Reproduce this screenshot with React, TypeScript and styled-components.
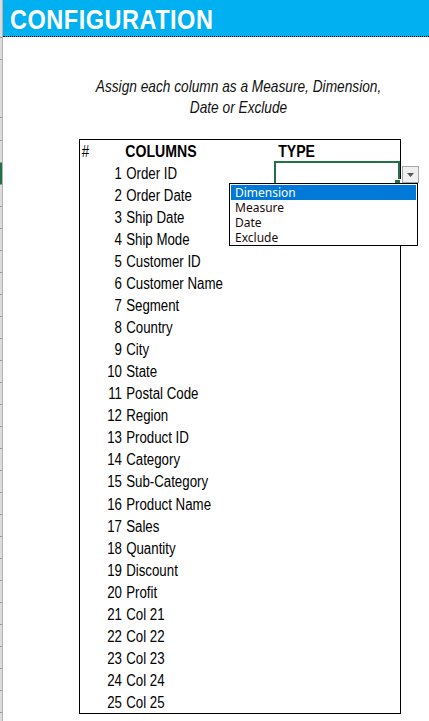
import React from 'react'
import styled, { createGlobalStyle } from 'styled-components'

const GlobalStyle = createGlobalStyle`
  html, body {
    margin: 0;
    padding: 0;
    background: #ffffff;
  }
  body {
    font-family: "Liberation Sans", Arial, sans-serif;
    color: #000;
  }
`

const columns = [
  'Order ID', 'Order Date', 'Ship Date', 'Ship Mode', 'Customer ID', 'Customer Name',
  'Segment', 'Country', 'City', 'State', 'Postal Code', 'Region', 'Product ID',
  'Category', 'Sub-Category', 'Product Name', 'Sales', 'Quantity', 'Discount', 'Profit',
  'Col 21', 'Col 22', 'Col 23', 'Col 24', 'Col 25',
]

const options = ['Dimension', 'Measure', 'Date', 'Exclude']

// heights of the spreadsheet rows, as seen in the row header strip
const gutterRows = [38, 22, 58, 23, 22, ...columns.map(() => 22), 40]

// no narrow face is installed, so the sheet text is squeezed to look like Arial Narrow
const NARROW = 0.83

export default function App() {
  return (
    <>
      <GlobalStyle />
      <Page>
        <Gutter>
          {gutterRows.map((h, i) => (
            <GutterCell key={i} h={h} active={i === 5} />
          ))}
        </Gutter>
        <Sheet>
          <TitleBar>
            <Title>CONFIGURATION</Title>
          </TitleBar>
          <Instructions>
            Assign each column as a Measure, Dimension,
            <br />
            Date or Exclude
          </Instructions>
          <Table>
            <HeaderRow>
              <Hash>#</Hash>
              <HeadLabel>COLUMNS</HeadLabel>
              <HeadType>TYPE</HeadType>
            </HeaderRow>
            {columns.map((name, i) => (
              <Row key={name}>
                <Num>{i + 1}</Num>
                <Name>{name}</Name>
                <TypeCell>
                  {i === 0 && (
                    <>
                      <Selection>
                        <Handle />
                      </Selection>
                      <ArrowButton>
                        <svg width="7" height="4" viewBox="0 0 7 4">
                          <path d="M0 0 L7 0 L3.5 4 Z" fill="#555" />
                        </svg>
                      </ArrowButton>
                      <List>
                        {options.map((o, j) => (
                          <Option key={o} selected={j === 0}>{o}</Option>
                        ))}
                      </List>
                    </>
                  )}
                </TypeCell>
              </Row>
            ))}
          </Table>
        </Sheet>
      </Page>
    </>
  )
}

const Page = styled.div`
  display: flex;
  width: 429px;
  height: 721px;
  overflow: hidden;
`

const Gutter = styled.div`
  width: 3px;
  flex-shrink: 0;
  display: flex;
  flex-direction: column;
  background: #dcdcdc;
  border-right: 1px solid #b4b4b4;
  box-sizing: border-box;
`

const GutterCell = styled.div<{ h: number; active?: boolean }>`
  height: ${(p) => p.h}px;
  flex-shrink: 0;
  box-sizing: border-box;
  border-bottom: 1px solid #9a9a9a;
  background: ${(p) => (p.active ? '#217346' : 'transparent')};
`

const Sheet = styled.div`
  flex: 1;
  display: flex;
  flex-direction: column;
`

const TitleBar = styled.div`
  height: 36px;
  background: #00b0f0;
  border-bottom: 1px dotted #000;
  display: flex;
  align-items: center;
  padding-left: 7px;
`

const Title = styled.div`
  color: #fff;
  font-weight: 700;
  font-size: 28px;
  letter-spacing: 0.6px;
  padding-top: 3px;
  transform: scaleX(0.84);
  transform-origin: left center;
`

const Instructions = styled.div`
  margin-top: 39px;
  padding-left: 44px;
  text-align: center;
  font-style: italic;
  font-size: 16.5px;
  line-height: 21px;
  color: #111;
  transform: scaleX(${NARROW});
  transform-origin: 238px center;
`

const Table = styled.div`
  margin-top: 21px;
  margin-left: 76px;
  width: 322px;
  border: 1px solid #000;
  box-sizing: border-box;
`

const Row = styled.div`
  display: grid;
  grid-template-columns: 42px 152px 1fr;
  height: 22.04px;
  align-items: center;
  font-size: 16px;
`

const HeaderRow = styled(Row)`
  font-weight: 700;
`

const Hash = styled.div`
  padding-left: 2px;
  padding-top: 2px;
  font-weight: 400;
  font-size: 16px;
  transform: scaleX(${NARROW});
  transform-origin: left center;
`

const HeadLabel = styled.div`
  padding-left: 4px;
  padding-top: 2px;
  font-size: 17px;
  transform: scaleX(${NARROW});
  transform-origin: left center;
`

const HeadType = styled.div`
  padding-left: 5px;
  padding-top: 2px;
  font-size: 17px;
  transform: scaleX(${NARROW});
  transform-origin: left center;
`

const Num = styled.div`
  text-align: right;
  padding-top: 2px;
  transform: scaleX(${NARROW});
  transform-origin: right center;
`

const Name = styled.div`
  padding-left: 5px;
  padding-top: 2px;
  white-space: nowrap;
  transform: scaleX(${NARROW});
  transform-origin: left center;
`

const TypeCell = styled.div`
  position: relative;
  height: 100%;
`

const Selection = styled.div`
  position: absolute;
  top: -1px;
  left: 0;
  right: 0;
  bottom: -1px;
  border: 2px solid #217346;
  box-sizing: border-box;
`

const Handle = styled.div`
  position: absolute;
  right: -3px;
  bottom: -3px;
  width: 5px;
  height: 5px;
  background: #217346;
  border: 1px solid #fff;
`

const ArrowButton = styled.div`
  position: absolute;
  left: calc(100% + 2px);
  top: 4px;
  width: 17px;
  height: 17px;
  box-sizing: border-box;
  border: 1px solid #a6a6a6;
  background: #efefef;
  display: flex;
  align-items: center;
  justify-content: center;
  z-index: 2;
`

const List = styled.div`
  position: absolute;
  left: -45px;
  top: 21px;
  width: 189px;
  height: 63px;
  box-sizing: border-box;
  border: 1px solid #000;
  background: #fff;
  padding: 1px;
  z-index: 3;
`

const Option = styled.div<{ selected?: boolean }>`
  height: 15px;
  line-height: 15px;
  padding-left: 4px;
  font-family: "Noto Sans", "Open Sans", sans-serif;
  font-size: 12px;
  color: ${(p) => (p.selected ? '#fff' : '#1a0a0a')};
  background: ${(p) => (p.selected ? '#0078d7' : 'transparent')};
`
